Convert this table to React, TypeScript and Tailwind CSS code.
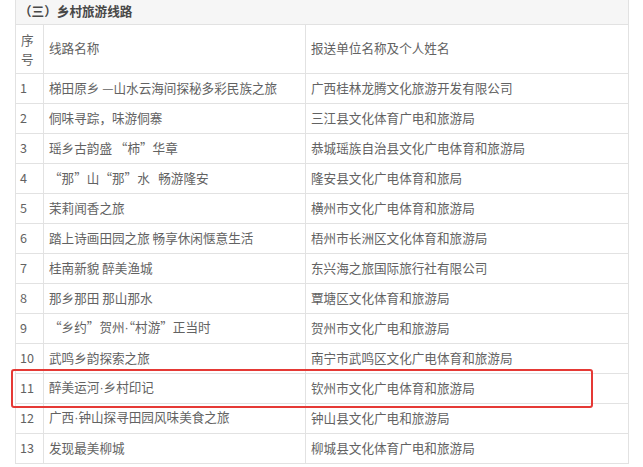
import type { ReactNode } from "react";

// 中点在 CJK 字体里是全角，参考图里是窄的，单独换成拉丁字体
const Dot = () => <span style={{ fontFamily: '"Liberation Sans", sans-serif' }}>·</span>;

const routes: [string, ReactNode, string][] = [
  ["1", "梯田原乡 —山水云海间探秘多彩民族之旅", "广西桂林龙腾文化旅游开发有限公司"],
  ["2", "侗味寻踪，味游侗寨", "三江县文化体育广电和旅游局"],
  ["3", "瑶乡古韵盛 “柿”华章", "恭城瑶族自治县文化广电体育和旅游局"],
  ["4", "“那”山“那”水   畅游隆安", "隆安县文化广电体育和旅局"],
  ["5", "茉莉闻香之旅", "横州市文化广电体育和旅游局"],
  ["6", "踏上诗画田园之旅 畅享休闲惬意生活", "梧州市长洲区文化体育和旅游局"],
  ["7", "桂南新貌 醉美渔城", "东兴海之旅国际旅行社有限公司"],
  ["8", "那乡那田 那山那水", "覃塘区文化体育和旅游局"],
  ["9", <>“乡约”贺州<Dot />“村游”正当时</>, "贺州市文化广电和旅游局"],
  ["10", "武鸣乡韵探索之旅", "南宁市武鸣区文化广电体育和旅游局"],
  ["11", <>醉美运河<Dot />乡村印记</>, "钦州市文化广电体育和旅游局"],
  ["12", <>广西<Dot />钟山探寻田园风味美食之旅</>, "钟山县文化广电和旅游局"],
  ["13", "发现最美柳城", "柳城县文化体育广电和旅游局"],
];

export default function App() {
  return (
    <div
      className="relative h-[467px] w-[643px] overflow-hidden bg-white px-[15px] text-[12.6px] text-[#626262]"
      style={{ fontFamily: '"Noto Sans CJK SC", "Noto Sans", sans-serif' }}
    >
      <table className="w-[614px] table-fixed border-collapse">
        <colgroup>
          <col className="w-[28px]" />
          <col className="w-[262px]" />
          <col />
        </colgroup>
        <tbody>
          <tr className="h-[24px] bg-[#f6f6f6]">
            <td
              colSpan={3}
              className="border-x border-b border-[#e2e2e2] pl-[3px] font-bold text-[#484848]"
            >
              （三）乡村旅游线路
            </td>
          </tr>
          <tr className="h-[49px]">
            <td className="border border-[#e2e2e2] px-[5px] leading-[19px]">
              序<br />号
            </td>
            <td className="border border-[#e2e2e2] px-[5px]">线路名称</td>
            <td className="border border-[#e2e2e2] px-[5px]">报送单位名称及个人姓名</td>
          </tr>
          {routes.map(([no, name, org]) => (
            <tr key={no} className="h-[30px]">
              <td className="whitespace-nowrap border border-[#e2e2e2] px-[4px]">{no}</td>
              <td className="whitespace-pre border border-[#e2e2e2] px-[5px]">{name}</td>
              <td className="whitespace-nowrap border border-[#e2e2e2] px-[5px]">{org}</td>
            </tr>
          ))}
        </tbody>
      </table>
      <div className="pointer-events-none absolute left-[11px] top-[369px] h-[39px] w-[582px] rounded-[3px] border-2 border-[#e53935]" />
    </div>
  );
}
